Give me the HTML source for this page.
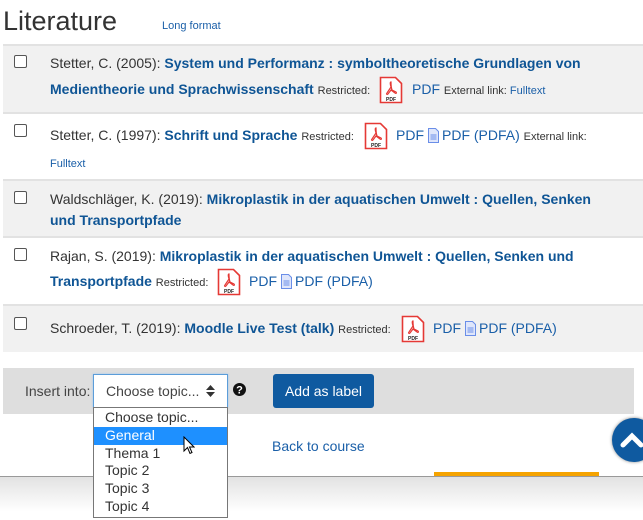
<!DOCTYPE html>
<html><head><meta charset="utf-8"><style>
*{margin:0;padding:0;box-sizing:border-box}
body{width:643px;height:520px;overflow:hidden;background:#fff;font-family:"Liberation Sans",sans-serif;position:relative;color:#333}
.a{position:absolute;white-space:nowrap;font-size:14px;line-height:18px}
.t{color:#0f5595;font-weight:bold}
.l{color:#1a5fa8}
.s{font-size:11px;color:#333}
.row{position:absolute;left:3px;width:640px}
.g{background:#f1f1f1}
.sep{position:absolute;left:3px;width:640px;height:2px;background:#e2e2e2}
.cb{position:absolute;left:14px;width:13px;height:13px;border:1px solid #555;border-radius:2px;background:#fff}
.pdf{position:absolute;width:24px;height:28px}
.doc{display:inline-block;vertical-align:-3px;margin:0 3px 0 4px}
</style></head><body>
<div class="a" style="left:3px;top:5px;font-size:27px;line-height:32px;color:#333">Literature</div>
<div class="a l" style="left:162px;top:17px;font-size:11px">Long format</div>

<div class="sep" style="top:44px"></div>
<div class="row g" style="top:46px;height:67px"></div>
<div class="sep" style="top:112px"></div>
<div class="row g" style="top:181px;height:55px"></div>
<div class="sep" style="top:179px"></div>
<div class="sep" style="top:236px"></div>
<div class="sep" style="top:304px"></div>
<div class="row g" style="top:306px;height:46px"></div>

<div class="cb" style="top:55px"></div>
<div class="cb" style="top:124px"></div>
<div class="cb" style="top:191px"></div>
<div class="cb" style="top:248px"></div>
<div class="cb" style="top:317px"></div>

<svg width="0" height="0" style="position:absolute"><defs>
<symbol id="p" viewBox="0 0 24 28"><path d="M1.5 1.5h15l6 6v19h-21z" fill="#fff" stroke="#e53935" stroke-width="1.6"/><path d="M12 6c-1 0-1 2 0 5l-4 6c-1 1 0 2 1 1l3-4 4 3c1 1 2 0 1-1l-4-2c-1-3-1-8-1-8z" fill="none" stroke="#e53935" stroke-width="1.2"/><text x="12" y="25" font-size="5" font-family="Liberation Sans" font-weight="bold" text-anchor="middle" fill="#222">PDF</text></symbol>
<symbol id="d" viewBox="0 0 11 15"><path d="M.5.5h7l3 3v11H.5z" fill="#dfe6fb" stroke="#6a8ee8"/><path d="M2.5 7h6M2.5 9h6M2.5 11h6" stroke="#6a8ee8"/></symbol>
</defs></svg>

<div class="a" style="left:50px;top:54px">Stetter, C. (2005): <span class="t">System und Performanz : symboltheoretische Grundlagen von</span></div>
<div class="a" style="left:50px;top:80px"><span class="t">Medientheorie und Sprachwissenschaft</span> <span class="s">Restricted:</span></div>
<svg class="pdf" style="left:379px;top:76px"><use href="#p"/></svg>
<div class="a" style="left:412px;top:80px"><span class="l">PDF</span> <span class="s">External link: <span class="l">Fulltext</span></span></div>

<div class="a" style="left:50px;top:126px">Stetter, C. (1997): <span class="t">Schrift und Sprache</span> <span class="s">Restricted:</span></div>
<svg class="pdf" style="left:364px;top:122px"><use href="#p"/></svg>
<div class="a" style="left:396px;top:126px"><span class="l">PDF</span><svg class="doc" width="11" height="15"><use href="#d"/></svg><span class="l">PDF (PDFA)</span> <span class="s">External link:</span></div>
<div class="a" style="left:50px;top:155px;font-size:11px;color:#1a5fa8">Fulltext</div>

<div class="a" style="left:50px;top:190px">Waldschläger, K. (2019): <span class="t">Mikroplastik in der aquatischen Umwelt : Quellen, Senken</span></div>
<div class="a t" style="left:50px;top:211px">und Transportpfade</div>

<div class="a" style="left:50px;top:247px">Rajan, S. (2019): <span class="t">Mikroplastik in der aquatischen Umwelt : Quellen, Senken und</span></div>
<div class="a" style="left:50px;top:272px"><span class="t">Transportpfade</span> <span class="s">Restricted:</span></div>
<svg class="pdf" style="left:217px;top:268px"><use href="#p"/></svg>
<div class="a" style="left:249px;top:272px"><span class="l">PDF</span><svg class="doc" width="11" height="15"><use href="#d"/></svg><span class="l">PDF (PDFA)</span></div>

<div class="a" style="left:50px;top:319px">Schroeder, T. (2019): <span class="t">Moodle Live Test (talk)</span> <span class="s">Restricted:</span></div>
<svg class="pdf" style="left:401px;top:315px"><use href="#p"/></svg>
<div class="a" style="left:433px;top:319px"><span class="l">PDF</span><svg class="doc" width="11" height="15"><use href="#d"/></svg><span class="l">PDF (PDFA)</span></div>

<div style="position:absolute;left:3px;top:368px;width:631px;height:46px;background:#dedede"></div>
<div class="a" style="left:25px;top:382px;color:#444">Insert into:</div>
<div style="position:absolute;left:93px;top:374px;width:135px;height:34px;border:1px solid #5b9dd9;background:#fff;box-shadow:0 0 2px #9cc5f0"></div>
<div class="a" style="left:106px;top:382px;color:#444">Choose topic...</div>
<svg style="position:absolute;left:206px;top:385px" width="9" height="12"><path d="M0 5L4.5 0 9 5zM0 7l4.5 5L9 7z" fill="#333"/></svg>
<svg style="position:absolute;left:233px;top:383px" width="13" height="13"><circle cx="6.5" cy="6.5" r="6.5" fill="#111"/><text x="6.5" y="10.5" font-size="11" font-weight="bold" text-anchor="middle" fill="#fff" font-family="Liberation Sans">?</text></svg>
<div style="position:absolute;left:273px;top:374px;width:101px;height:34px;background:#0f5aa0;border-radius:3px;color:#fff;font-size:14px;line-height:34px;text-align:center">Add as label</div>

<div class="a l" style="left:272px;top:437px">Back to course</div>
<div style="position:absolute;left:434px;top:472px;width:165px;height:4px;background:#f5a300"></div>
<div style="position:absolute;left:0;top:476px;width:643px;height:1px;background:#999"></div>
<div style="position:absolute;left:0;top:477px;width:643px;height:43px;background:linear-gradient(#e2e2e2,#fff 80%)"></div>
<div style="position:absolute;left:612px;top:418px;width:44px;height:44px;border-radius:50%;background:#0f5aa0;box-shadow:0 0 3px #888"></div>
<svg style="position:absolute;left:620px;top:430px" width="23" height="20"><path d="M3 15L12 6l9 9" fill="none" stroke="#fff" stroke-width="5" stroke-linecap="round"/></svg>

<div style="position:absolute;left:93px;top:407px;width:135px;height:111px;border:1px solid #777;background:#fff"></div>
<div class="a" style="left:105px;top:408px;color:#333">Choose topic...</div>
<div style="position:absolute;left:94px;top:427px;width:133px;height:18px;background:#1e90ff"></div>
<div class="a" style="left:105px;top:426px;color:#fff">General</div>
<div class="a" style="left:105px;top:444px">Thema 1</div>
<div class="a" style="left:105px;top:461px">Topic 2</div>
<div class="a" style="left:105px;top:479px">Topic 3</div>
<div class="a" style="left:105px;top:497px">Topic 4</div>
<svg style="position:absolute;left:183px;top:436px" width="12" height="19"><path d="M1 1v14l3.5-3.5 2.5 6 2-1-2.5-5.5H11z" fill="#fff" stroke="#000" stroke-width="1"/></svg>
</body></html>
